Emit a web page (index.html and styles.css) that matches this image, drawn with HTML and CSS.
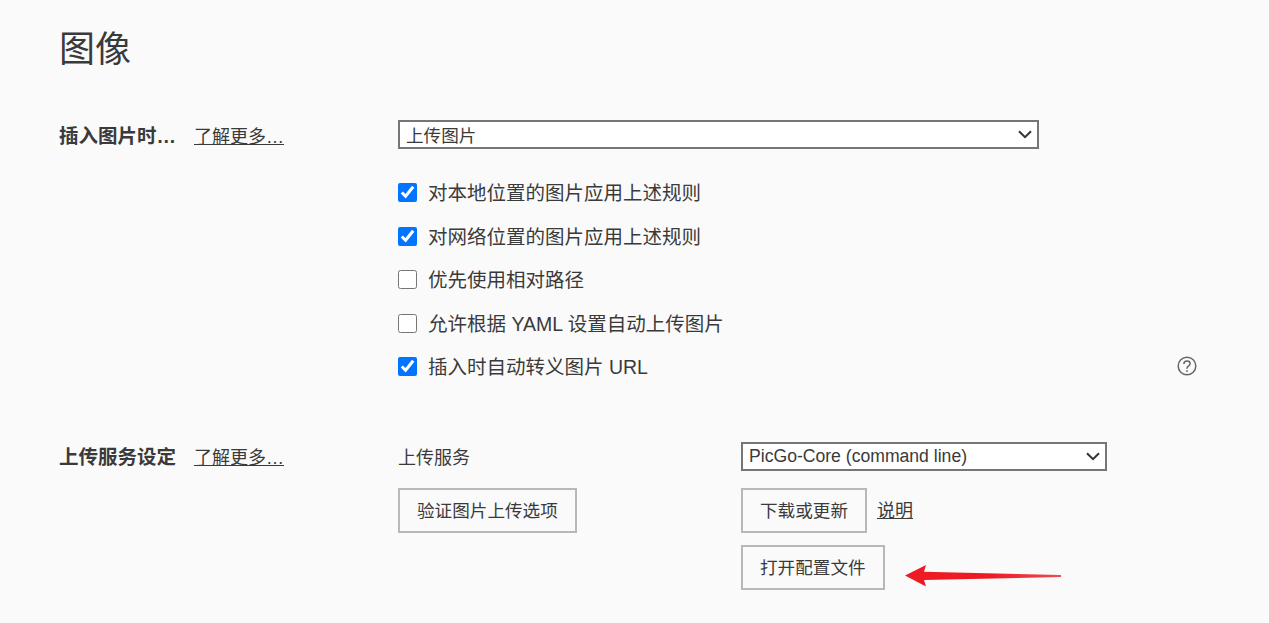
FILE: index.html
```html
<!DOCTYPE html>
<html lang="zh">
<head>
<meta charset="utf-8">
<title>图像</title>
<link rel="stylesheet" href="styles.css">
</head>
<body>
<main class="page">
  <h1 class="title">图像</h1>

  <section class="section insert">
    <div class="heading">
      <span class="label">插入图片时…</span>
      <a class="more" href="#">了解更多…</a>
    </div>
    <div class="body">
      <select class="select wide"><option>上传图片</option></select>
      <ul class="checks">
        <li class="check"><input type="checkbox" checked><span>对本地位置的图片应用上述规则</span></li>
        <li class="check"><input type="checkbox" checked><span>对网络位置的图片应用上述规则</span></li>
        <li class="check"><input type="checkbox"><span>优先使用相对路径</span></li>
        <li class="check"><input type="checkbox"><span>允许根据 YAML 设置自动上传图片</span></li>
        <li class="check"><input type="checkbox" checked><span>插入时自动转义图片 URL</span>
          <svg class="help" width="20" height="20" viewBox="0 0 20 20" fill="none" stroke="#666" stroke-width="1.5">
            <circle cx="10" cy="10" r="8.8"/>
            <path d="M6.9 7.9c0-1.8 1.3-2.9 3.1-2.9s3.1 1 3.1 2.6c0 1.3-.8 1.9-1.7 2.5-.9.6-1.4 1.1-1.4 2.2v.5"/>
            <path d="M10 14.2v1.7"/>
          </svg>
        </li>
      </ul>
    </div>
  </section>

  <section class="section upload">
    <div class="heading">
      <span class="label">上传服务设定</span>
      <a class="more" href="#">了解更多…</a>
    </div>
    <div class="grid">
      <span class="service">上传服务</span>
      <select class="select narrow"><option>PicGo-Core (command line)</option></select>
      <div class="cell"><button class="btn">验证图片上传选项</button></div>
      <div class="actions">
        <div class="action"><button class="btn">下载或更新</button><a class="doc" href="#">说明</a></div>
        <div class="action"><button class="btn">打开配置文件</button></div>
      </div>
    </div>
  </section>
</main>
<svg class="arrow" width="160" height="24" viewBox="0 0 160 24">
  <defs>
    <linearGradient id="tail" x1="0" x2="1" y1="0" y2="0">
      <stop offset="0" stop-color="#ed1c24"/>
      <stop offset=".55" stop-color="#ed1c24"/>
      <stop offset="1" stop-color="#ef4a50"/>
    </linearGradient>
  </defs>
  <path fill="url(#tail)" d="M0 12.5 21 2l-2 6.8L156 12v2L19 17l2 6.5z"/>
</svg>
</body>
</html>
```

FILE: styles.css
```css
* { box-sizing: border-box; }
html, body { margin: 0; height: 100%; }
body {
  position: relative;
  overflow: hidden;
  background: #fafafa;
  color: #3a3a3a;
  font-family: "Liberation Sans", "Noto Sans CJK SC", sans-serif;
  font-size: 18px;
}
.page { padding: 24px 72px 0 59px; }
.title {
  margin: 0;
  font-size: 36px;
  font-weight: 400;
  line-height: 52px;
}
.section { display: flex; }
.insert { margin-top: 44px; }
.upload { margin-top: 53.25px; }
.heading {
  flex: 0 0 339px;
  display: flex;
  align-items: baseline;
  gap: 18px;
}
.insert .heading { padding-top: 2px; }
.upload .heading { padding-top: 1px; }
.label { font-size: 19.5px; font-weight: 700; line-height: 29px; }
.more, .doc { color: #3a3a3a; text-decoration: underline; }
.doc { padding-bottom: 2px; }
.body { flex: 1; }
.select {
  display: block;
  height: 29px;
  border: 2px solid #767676;
  border-radius: 0;
  appearance: none;
  background: #fff url("data:image/svg+xml,%3Csvg xmlns='http://www.w3.org/2000/svg' width='14' height='9' viewBox='0 0 14 9'%3E%3Cpath d='M1 1.2l6 6 6-6' fill='none' stroke='%23333' stroke-width='2'/%3E%3C/svg%3E") no-repeat right 5px center;
  color: #3a3a3a;
  font: inherit;
  font-size: 17.6px;
  padding: 0 6px;
}
.wide { width: 641px; padding-top: 3px; }
.narrow { width: 366px; }
.checks { list-style: none; margin: 21.75px 0 0; padding: 0; }
.check {
  display: flex;
  align-items: center;
  height: 43.5px;
  font-size: 19.5px;
}
.check span { padding-bottom: 2px; }
.check input { width: 19px; height: 19px; margin: 0 11px 0 0; flex: none; accent-color: #0075ff; }
.help { margin-left: auto; margin-bottom: 2px; }
.grid {
  display: grid;
  grid-template-columns: 343px 1fr;
  row-gap: 17px;
  flex: 1;
}
.service { height: 29px; padding-top: 2px; line-height: 29px; }
.btn {
  height: 45px;
  padding: 0 17px 2px;
  border: 2px solid #b8b8b8;
  border-radius: 0;
  background: #fafafa;
  color: #3a3a3a;
  font: inherit;
  font-size: 17.6px;
  cursor: pointer;
}
.actions { display: flex; flex-direction: column; gap: 12px; }
.action { display: flex; align-items: center; gap: 10px; }
.arrow { position: absolute; left: 905px; top: 563px; }
```
